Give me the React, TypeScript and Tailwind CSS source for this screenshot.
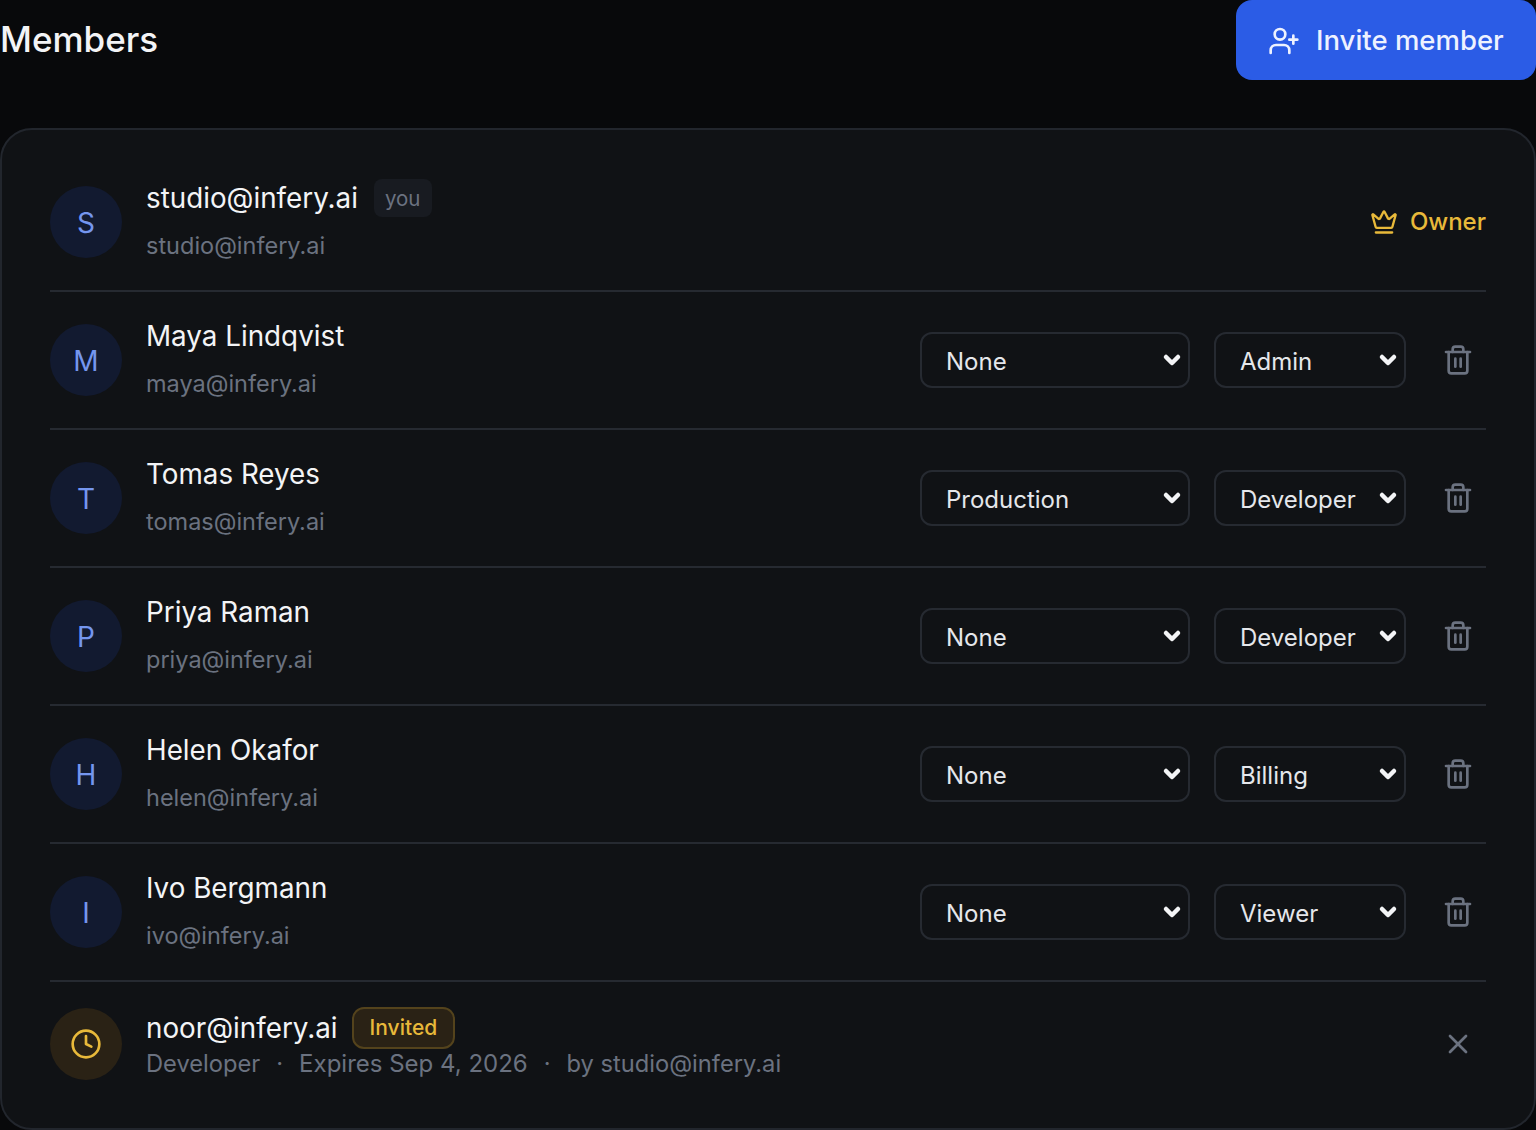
import { ChevronDown, Clock, Crown, Trash2, UserPlus, X } from "lucide-react";

type Member = {
  name: string;
  email: string;
  env: string;
  role: string;
};

const envs = ["None", "Production"];
const roles = ["Admin", "Developer", "Billing", "Viewer"];

const members: Member[] = [
  { name: "Maya Lindqvist", email: "maya@infery.ai", env: "None", role: "Admin" },
  { name: "Tomas Reyes", email: "tomas@infery.ai", env: "Production", role: "Developer" },
  { name: "Priya Raman", email: "priya@infery.ai", env: "None", role: "Developer" },
  { name: "Helen Okafor", email: "helen@infery.ai", env: "None", role: "Billing" },
  { name: "Ivo Bergmann", email: "ivo@infery.ai", env: "None", role: "Viewer" },
];

function Avatar({ letter }: { letter: string }) {
  return (
    <div className="flex h-[72px] w-[72px] shrink-0 items-center justify-center rounded-full bg-[#121a30] pt-0.5 text-[28px] text-[#7596ee]">
      {letter}
    </div>
  );
}

function RowSelect({ value, options, width }: { value: string; options: string[]; width: string }) {
  return (
    <div className={`relative h-14 ${width}`}>
      <select
        defaultValue={value}
        className="h-14 w-full appearance-none rounded-xl border-2 border-[#262a31] bg-[#101215] pt-1 pl-6 text-[24px] text-[#e5e7eb] outline-none"
      >
        {options.map((o) => (
          <option key={o}>{o}</option>
        ))}
      </select>
      <ChevronDown
        className="pointer-events-none absolute right-1.5 top-4 h-6 w-6 text-[#f3f4f6]"
        strokeWidth={4.5}
      />
    </div>
  );
}

export default function App() {
  return (
    <div className="h-[1130px] overflow-hidden bg-[#08090b] font-['Inter',sans-serif]">
      <div className="flex items-start justify-between">
        <h1 className="mt-[15px] text-[35px] leading-[48px] font-medium text-[#f3f4f6]">Members</h1>
        <button className="flex h-20 w-[300px] items-center gap-4 rounded-2xl bg-[#2b5ce6] pt-0.5 pl-8 text-[27.5px] font-medium text-[#eef2ff]">
          <UserPlus className="h-8 w-8" strokeWidth={2} />
          Invite member
        </button>
      </div>

      <div className="mt-12 rounded-[32px] border-2 border-[#22262d] bg-[#101215] px-12 pt-6 pb-[22px]">
        <div className="flex items-center gap-6 border-b-2 border-[#262a31] py-8">
          <Avatar letter="S" />
          <div className="min-w-0 flex-1">
            <div className="flex h-6 items-center gap-4">
              <span className="text-[27.8px] leading-6 text-[#f3f4f6]">studio@infery.ai</span>
              <span className="flex h-[38px] items-center rounded-lg bg-[#181b21] px-[11px] pt-0.5 text-[20.5px] text-[#6b7280]">you</span>
            </div>
            <div className="mt-6 text-[23.5px] leading-6 text-[#6b7280]">studio@infery.ai</div>
          </div>
          <div className="flex items-center gap-3 text-[24px] font-medium text-[#e8b93a]">
            <Crown className="h-7 w-7" strokeWidth={2} />
            Owner
          </div>
        </div>

        {members.map((m) => (
          <div key={m.email} className="flex items-center gap-6 border-b-2 border-[#262a31] py-8">
            <Avatar letter={m.name[0]} />
            <div className="min-w-0 flex-1">
              <div className="text-[27.8px] leading-6 text-[#f3f4f6]">{m.name}</div>
              <div className="mt-6 text-[23.5px] leading-6 text-[#6b7280]">{m.email}</div>
            </div>
            <RowSelect value={m.env} options={envs} width="w-[270px]" />
            <RowSelect value={m.role} options={roles} width="w-[192px]" />
            <button className="flex h-14 w-14 items-center justify-center text-[#6b7280]">
              <Trash2 className="h-8 w-8" strokeWidth={2} />
            </button>
          </div>
        ))}

        <div className="flex items-center gap-6 py-[26px]">
          <div className="flex h-[72px] w-[72px] shrink-0 items-center justify-center rounded-full bg-[#2a2215] text-[#e8b93a]">
            <Clock className="h-8 w-8" strokeWidth={2} />
          </div>
          <div className="min-w-0 flex-1">
            <div className="flex h-10 items-center gap-[14px]">
              <span className="text-[27.8px] leading-10 text-[#f3f4f6]">noor@infery.ai</span>
              <span className="flex h-[42px] items-center rounded-xl border-2 border-[#54431c] bg-[#2a2215] px-4 text-[21px] font-medium text-[#e8b93a]">
                Invited
              </span>
            </div>
            <div className="flex h-8 items-center gap-4 text-[23.7px] leading-8 text-[#6b7280]">
              <span>Developer</span>
              <span>·</span>
              <span className="text-[24px]">Expires Sep 4, 2026</span>
              <span>·</span>
              <span>by studio@infery.ai</span>
            </div>
          </div>
          <button className="flex h-14 w-14 items-center justify-center text-[#6b7280]">
            <X className="h-8 w-8" strokeWidth={2} />
          </button>
        </div>
      </div>
    </div>
  );
}
